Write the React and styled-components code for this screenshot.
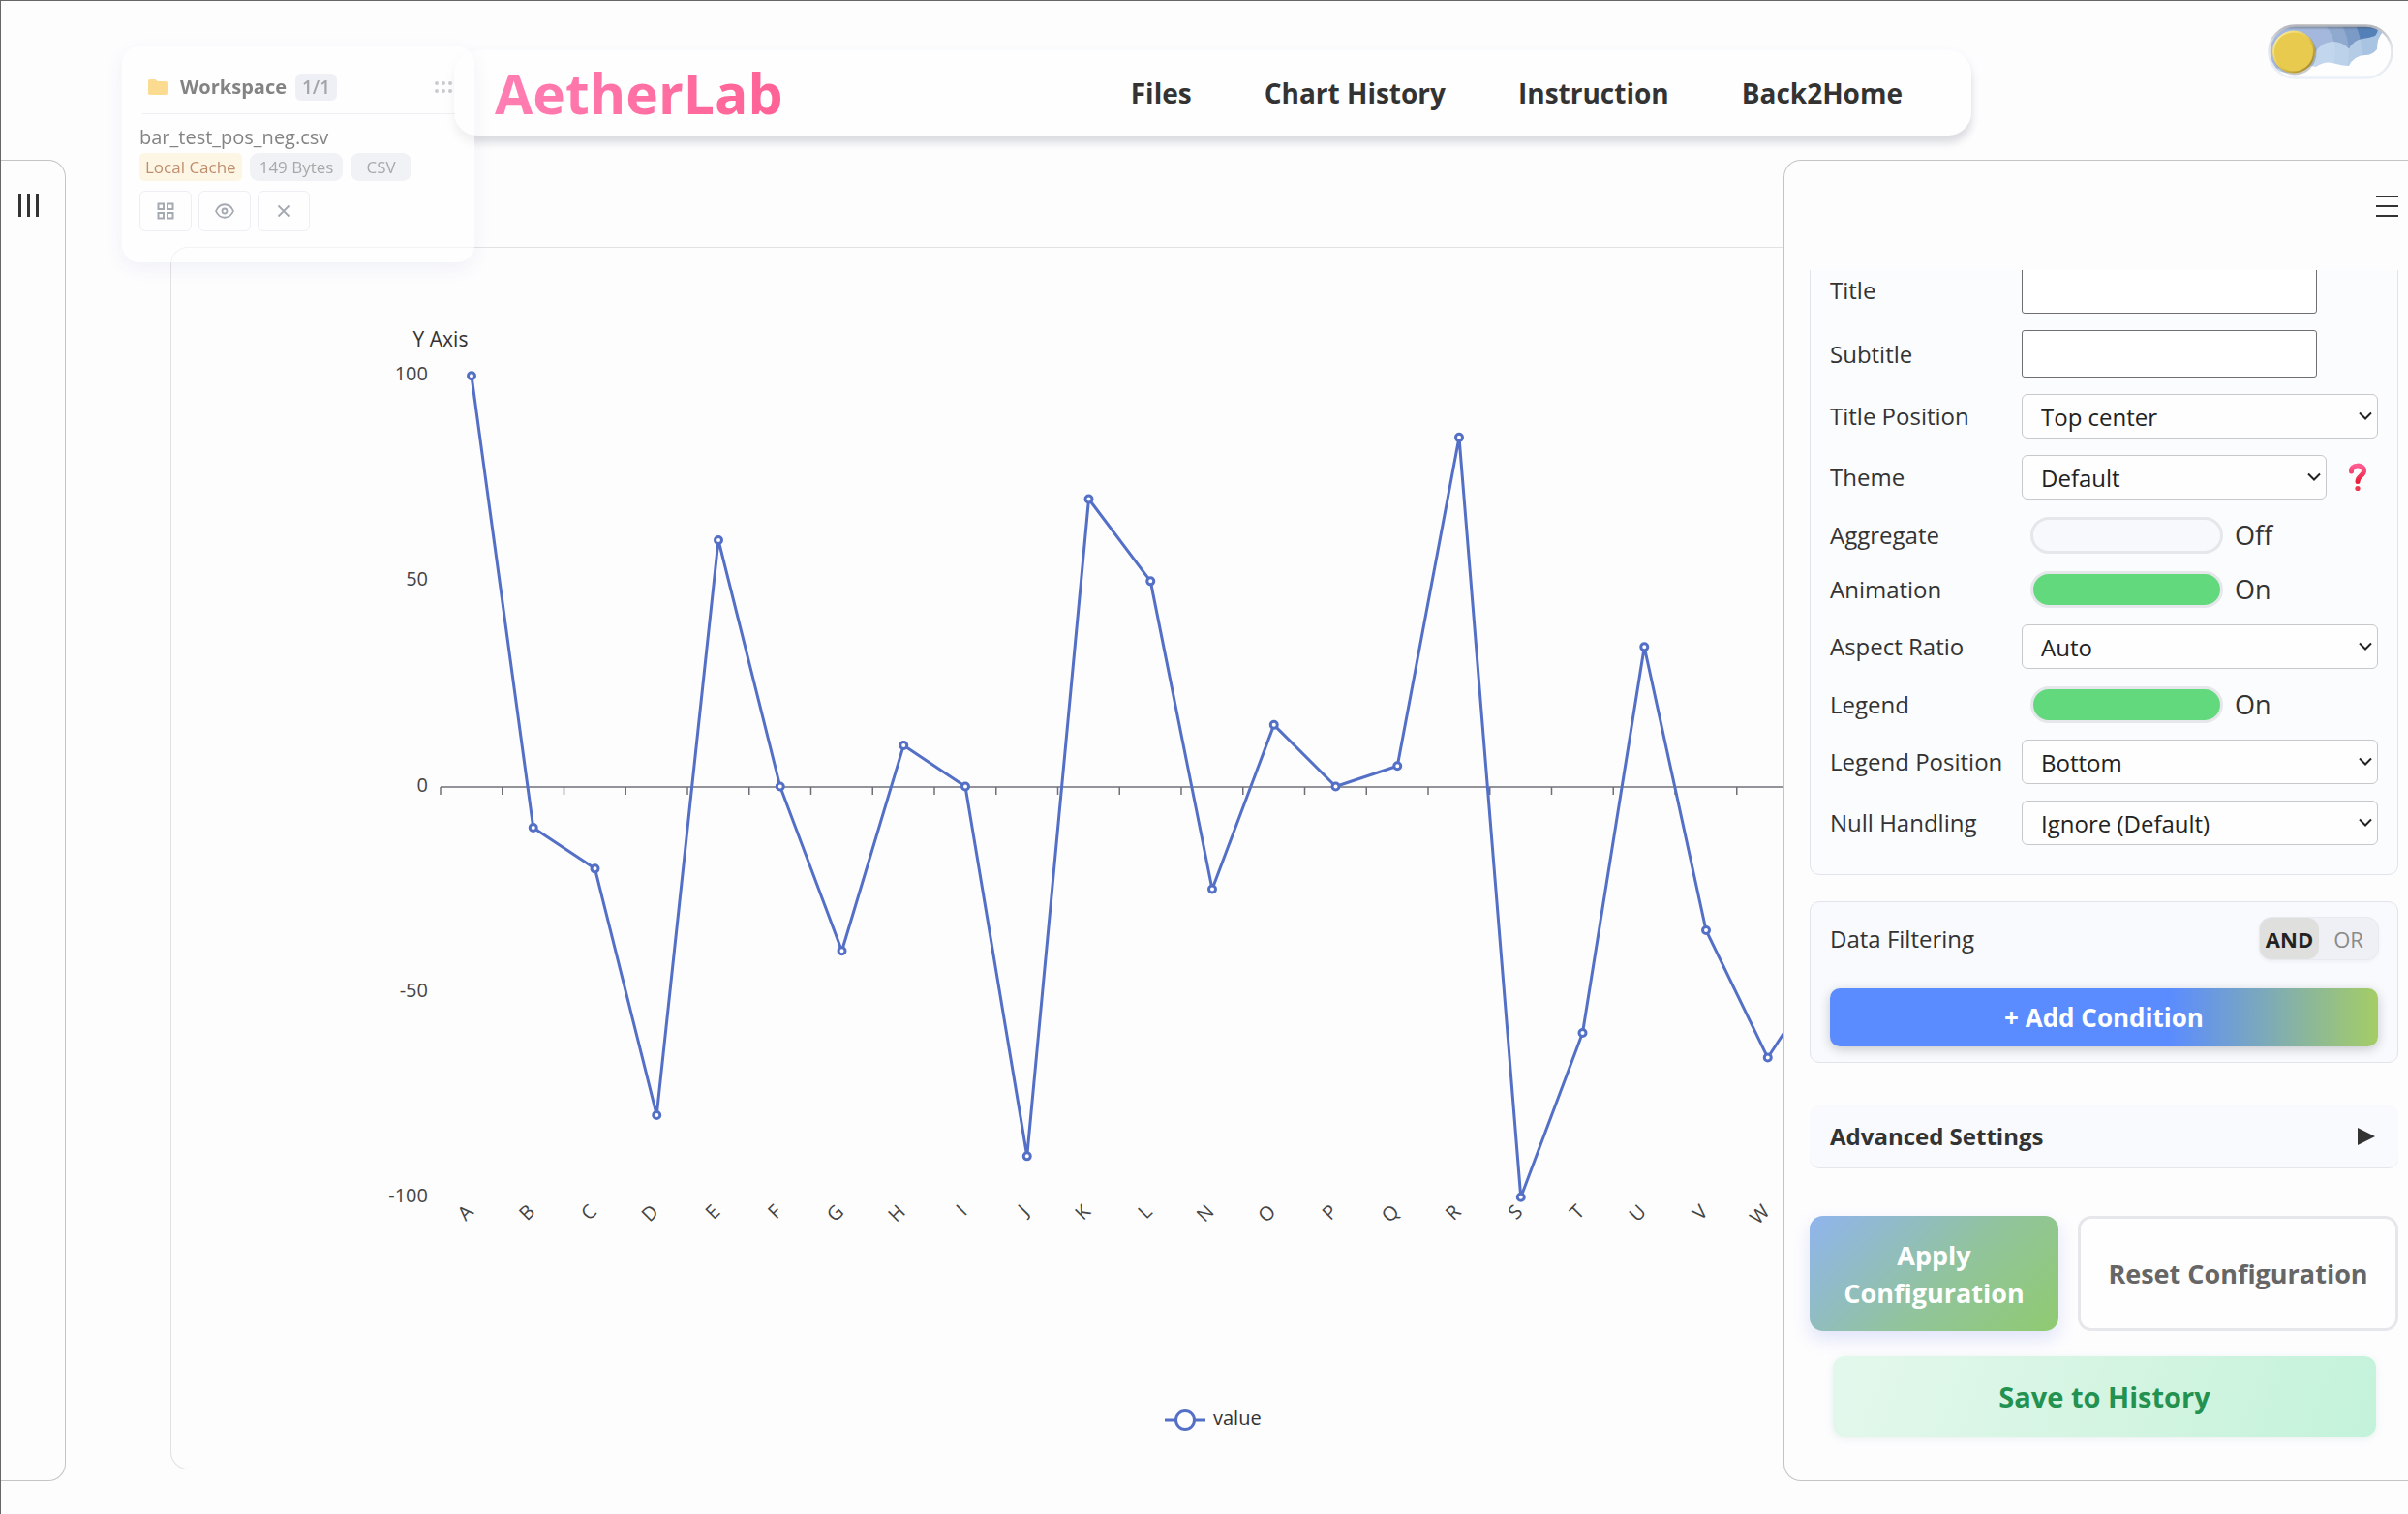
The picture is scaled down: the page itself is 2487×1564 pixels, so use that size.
import React, { useState } from "react";
import styled, { createGlobalStyle, css } from "styled-components";

const Global = createGlobalStyle`
  *, *::before, *::after { box-sizing: border-box; }
  body { margin: 0; background: #fdfdfe; }
  body, button, input, select { font-family: "Open Sans", "Noto Sans", sans-serif; color: #333; }
`;

const Page = styled.div`
  position: relative;
  min-height: 100vh;
  display: flex;
  flex-direction: column;
  overflow: hidden;
  border-top: 1px solid #666;
  border-left: 1px solid #666;
`;

/* ---------- top bar ---------- */

const TopBar = styled.div`
  display: grid;
  grid-template-columns: 468fr 1567fr 451fr;
  align-items: start;
  padding-top: 24px;
  height: 164px;
`;

const Header = styled.header`
  grid-column: 2;
  margin-top: 27px;
  height: 88px;
  padding: 0 71px 0 42px;
  display: flex;
  align-items: center;
  justify-content: space-between;
  border-radius: 24px;
  background: #fefefe;
  box-shadow: 0 8px 8px rgba(0, 0, 0, 0.1), 0 4px 12px rgba(60, 80, 140, 0.07);
`;

const Logo = styled.a`
  font-size: 57px;
  font-weight: 700;
  line-height: 80px;
  text-decoration: none;
  color: transparent;
  background: linear-gradient(90deg, #ff7eb3, #ff6295);
  background-clip: text;
  -webkit-background-clip: text;
`;

const Nav = styled.nav`
  display: flex;
  gap: 75px;
`;

const NavLink = styled.a`
  font-size: 28px;
  font-weight: 700;
  line-height: 40px;
  color: #333;
  text-decoration: none;
`;

const ThemeSwitch = styled.button`
  grid-column: 3;
  justify-self: end;
  margin-right: 15px;
  padding: 0;
  border: 0;
  width: 130px;
  height: 58px;
  background: none;
  svg { display: block; }
`;

/* ---------- floating workspace ---------- */

const Workspace = styled.section`
  position: absolute;
  left: 125px;
  top: 47px;
  z-index: 3;
  width: 364px;
  height: 223px;
  padding: 20px 20px 0 18px;
  border-radius: 18px;
  background: #fff;
  opacity: 0.6;
  box-shadow: 0 6px 20px rgba(70, 90, 160, 0.12);
`;

const WorkspaceHead = styled.div`
  display: flex;
  align-items: center;
  height: 50px;
  padding: 0 3px 6px 6px;
  border-bottom: 1px solid #e5e7eb;
  margin-left: 3px;
`;

const WorkspaceTitle = styled.h2`
  margin: 0 9px 0 13px;
  font-size: 20px;
  line-height: 28px;
  font-weight: 700;
`;

const Count = styled.span`
  padding: 0 7px;
  border-radius: 6px;
  background: #e7e9f0;
  color: #666a73;
  font-size: 19px;
  font-weight: 600;
  line-height: 28px;
`;

const Grip = styled.svg`
  margin-left: auto;
`;

const FileName = styled.div`
  margin-top: 10px;
  font-size: 20px;
  line-height: 28px;
  height: 30px;
`;

const Tags = styled.div`
  display: flex;
  gap: 8px;
`;

const Tag = styled.span`
  padding: 0 ${(p) => p.$pad}px;
  border-radius: ${(p) => (p.$warm ? 5 : 9)}px;
  background: ${(p) => (p.$warm ? "#fef3d3" : "#e9ebf2")};
  color: ${(p) => (p.$warm ? "#97450f" : "#70736f")};
  font-size: 17px;
  line-height: 29px;
  white-space: nowrap;
`;

const FileActions = styled.div`
  display: flex;
  gap: 7px;
  margin-top: 10px;
`;

const FileButton = styled.button`
  display: grid;
  place-items: center;
  width: 54px;
  height: 42px;
  padding: 0;
  border: 1px solid #e3e6ee;
  border-radius: 6px;
  background: #fff;
  color: #6b7280;
`;

/* ---------- body ---------- */

const Body = styled.div`
  display: flex;
  height: calc(100vh - 199px);
  min-height: 1250px;
`;

const LeftPanel = styled.aside`
  flex: 0 0 67px;
  border: 1px solid #c4c4c4;
  border-left: 0;
  border-radius: 0 18px 18px 0;
`;

const PanelToggle = styled.button`
  display: block;
  padding: 0;
  border: 0;
  background: none;
  line-height: 0;
  margin: ${(p) => (p.$left ? "34px 0 0 17px" : "35px 0 0 auto")};
`;

const ChartCard = styled.main`
  flex: 1 1 0;
  min-width: 0;
  margin: 90px 0 12px 108px;
  border: 1px solid #e2e2e4;
  border-right: 0;
  border-radius: 18px 0 0 18px;
  overflow: hidden;
`;

const ChartSvg = styled.svg`
  display: block;
  width: 100%;
  height: 1260px;
  font-family: "Open Sans", "Noto Sans", sans-serif;
`;

const RightPanel = styled.aside`
  flex: 0 0 645px;
  display: flex;
  flex-direction: column;
  border: 1px solid #c4c4c4;
  border-right: 0;
  border-radius: 18px 0 0 18px;
  background: #fdfdfe;
`;

const PanelHead = styled.div`
  flex: 0 0 113px;
  padding-right: 10px;
`;

const Scroller = styled.form`
  flex: 1 1 0;
  min-height: 0;
  overflow: hidden;
  display: flex;
  flex-direction: column;
  justify-content: flex-end;
  padding: 0 10px 45px 26px;
`;

const Card = styled.section`
  flex: none;
  border: 1px solid #e1e4eb;
  border-radius: 10px;
  background: ${(p) => p.$bg};
  padding: 16px 20px ${(p) => p.$bottom}px;
`;

const Options = styled(Card)`
  display: flex;
  flex-direction: column;
  gap: 17px;
`;

const Row = styled.div`
  display: grid;
  grid-template-columns: 198px 1fr;
  align-items: center;
`;

const labelText = css`
  font-size: 24px;
  line-height: 32px;
  color: #333;
`;

const Label = styled.label`
  ${labelText}
  white-space: nowrap;
`;

const TextBox = styled.input`
  width: 305px;
  height: 49px;
  padding: 0 10px;
  border: 1px solid #6f6f73;
  border-radius: 3px;
  background: #fff;
  font-size: 24px;
`;

const Controls = styled.div`
  display: flex;
  align-items: center;
`;

const SelectWrap = styled.div`
  position: relative;
  flex: ${(p) => (p.$short ? "0 0 315px" : "1")};
  svg {
    position: absolute;
    right: 6px;
    top: 18px;
    pointer-events: none;
  }
`;

const SelectBox = styled.select`
  appearance: none;
  display: block;
  width: 100%;
  height: 46px;
  padding: 0 30px 0 19px;
  border: 1px solid #c6c8cc;
  border-radius: 6px;
  background: #fefefe;
  font-size: 24px;
  color: #222;
`;

const HelpButton = styled.button`
  margin-left: 20px;
  padding: 0;
  border: 0;
  background: none;
  line-height: 0;
`;

const Switch = styled.input`
  appearance: none;
  margin: 0 12px 0 9px;
  width: 199px;
  height: 38px;
  border: 3px solid #e5e7eb;
  border-radius: 19px;
  background: #f8f9fc;
  &:checked { background: #63d97d; }
`;

const SwitchText = styled.span`
  font-size: 27px;
  line-height: 39px;
`;

const FilterHead = styled.div`
  display: flex;
  align-items: center;
  justify-content: space-between;
  margin-bottom: 30px;
`;

const FilterLabel = styled.span`
  ${labelText}
`;

const Segment = styled.div`
  display: flex;
  width: 122px;
  height: 43px;
  border-radius: 12px;
  background: #eef0f6;
  box-shadow: 0 0 0 1px #e8eaf1, 0 2px 4px rgba(60, 80, 140, 0.08);
`;

const SegmentButton = styled.button`
  flex: 1;
  padding: 0;
  border: 0;
  border-radius: 12px;
  font-size: 22px;
  background: ${(p) => (p.$on ? "#dfdfde" : "transparent")};
  font-weight: ${(p) => (p.$on ? 700 : 400)};
  color: ${(p) => (p.$on ? "#222" : "#8a8a88")};
`;

const AddButton = styled.button`
  display: block;
  width: 100%;
  height: 60px;
  border: 0;
  border-radius: 10px;
  background: linear-gradient(90deg, #5b8cff 0%, #5b8cff 62%, #a4cd66 100%);
  box-shadow: 0 3px 12px rgba(0, 0, 0, 0.2);
  color: #fff;
  font-size: 26px;
  font-weight: 700;
`;

const Advanced = styled.button`
  flex: none;
  display: flex;
  align-items: center;
  justify-content: space-between;
  margin-top: 43px;
  height: 66px;
  padding: 0 24px 0 21px;
  border: 0;
  border-bottom: 1px solid #e5e7ec;
  border-radius: 10px;
  background: #f9fafd;
  font-size: 24px;
  font-weight: 700;
`;

const Actions = styled.div`
  flex: none;
  display: grid;
  grid-template-columns: minmax(0, 257fr) minmax(0, 331fr);
  gap: 20px;
  margin: 49px 0 26px;
`;

const ActionButton = styled.button`
  height: 119px;
  border-radius: 14px;
  font-size: 27px;
  line-height: 39px;
  font-weight: 700;
  ${(p) =>
    p.$primary
      ? css`
          padding: 0 20px;
          border: 0;
          color: #fff;
          background: linear-gradient(135deg, #90b4ee 0%, #91c49c 55%, #90ca70 100%);
          box-shadow: 0 8px 18px rgba(91, 110, 220, 0.18);
        `
      : css`
          padding: 0;
          white-space: nowrap;
          border: 3px solid #e5e7eb;
          color: #666;
          background: #fefefe;
        `}
`;

const SaveButton = styled.button`
  flex: none;
  margin: 0 23px 0 24px;
  height: 83px;
  border: 0;
  border-radius: 12px;
  background: linear-gradient(110deg, #e3f8ec 0%, #d6f5e3 45%, #c3f2da 100%);
  box-shadow: 0 2px 8px rgba(60, 120, 100, 0.1);
  color: #239150;
  font-size: 29px;
  font-weight: 700;
`;

const Gap = styled.div`
  flex: 0 0 27px;
`;

/* ---------- chart ---------- */

const DATA = [
  ["A", 100], ["B", -10], ["C", -20], ["D", -80], ["E", 60], ["F", 0],
  ["G", -40], ["H", 10], ["I", 0], ["J", -90], ["K", 70], ["L", 50],
  ["N", -25], ["O", 15], ["P", 0], ["Q", 5], ["R", 85], ["S", -100],
  ["T", -60], ["U", 34], ["V", -35], ["W", -66], ["X", -43],
];
const STEP = 63.75;
const px = (i) => 310 + i * STEP;
const py = (v) => 556.5 - v * 4.243;

function Chart() {
  const zero = 557;
  return (
    <ChartSvg role="img" aria-label="Line chart of value">
      <text x="278" y="102" fontSize="21" textAnchor="middle" fill="#333">Y Axis</text>
      {[100, 50, 0, -50, -100].map((v) => (
        <text key={v} x="265" y={py(v) + 5} fontSize="20" textAnchor="end" fill="#444">{v}</text>
      ))}
      <line x1="278" x2="1700" y1={zero} y2={zero} stroke="#6e7079" strokeWidth="1.500" />
      {DATA.map(([name], i) => (
        <line key={name} x1={278 + i * STEP} x2={278 + i * STEP} y1={zero} y2={zero + 8} stroke="#6e7079" strokeWidth="1.500" />
      ))}
      <polyline
        points={DATA.map(([, v], i) => `${px(i)},${py(v)}`).join(" ")}
        fill="none" stroke="#5470c6" strokeWidth="3" strokeLinejoin="bevel"
      />
      {DATA.map(([name, v], i) => (
        <circle key={name} cx={px(i)} cy={py(v)} r="3.500" fill="#fff" stroke="#5470c6" strokeWidth="3" />
      ))}
      {DATA.slice(0, 22).map(([name], i) => (
        <text key={name} transform={`translate(${px(i) - 2} 992) rotate(-45)`} y="7" fontSize="20" textAnchor="end" fill="#444">
          {name}
        </text>
      ))}
      <g stroke="#5470c6" strokeWidth="3">
        <line x1="1026" x2="1068" y1="1211" y2="1211" />
        <circle cx="1047" cy="1211" r="9.500" fill="#fff" />
      </g>
      <text x="1076" y="1216" fontSize="20" fill="#333">value</text>
    </ChartSvg>
  );
}

/* ---------- small parts ---------- */

const Chevron = () => (
  <svg width="14" height="10" viewBox="0 0 14 10" fill="none" stroke="#222" strokeWidth="2">
    <path d="M1 1.500l6 6 6-6" />
  </svg>
);

function SelectRow({ id, label, value, short, children }) {
  return (
    <Row>
      <Label htmlFor={id}>{label}</Label>
      <Controls>
        <SelectWrap $short={short}>
          <SelectBox id={id} defaultValue={value}>
            <option>{value}</option>
          </SelectBox>
          <Chevron />
        </SelectWrap>
        {children}
      </Controls>
    </Row>
  );
}

function SwitchRow({ id, label, initial }) {
  const [on, setOn] = useState(initial);
  return (
    <Row>
      <Label htmlFor={id}>{label}</Label>
      <Controls>
        <Switch id={id} type="checkbox" checked={on} onChange={() => setOn(!on)} />
        <SwitchText>{on ? "On" : "Off"}</SwitchText>
      </Controls>
    </Row>
  );
}

const SkySwitch = () => (
  <svg width="130" height="58" viewBox="0 0 130 58">
    <defs>
      <clipPath id="pill"><rect x="2" y="2" width="126" height="53" rx="26.500" /></clipPath>
      <linearGradient id="shade" x1="0" y1="0" x2="0" y2="1">
        <stop offset="0" stopColor="#444" stopOpacity=".7" />
        <stop offset=".1" stopColor="#444" stopOpacity="0" />
      </linearGradient>
      <linearGradient id="rim" x1="0" y1="0" x2="0" y2="1">
        <stop offset="0" stopColor="#b4b6bb" />
        <stop offset=".35" stopColor="#dfe2e9" />
        <stop offset="1" stopColor="#ecf0f7" />
      </linearGradient>
      <linearGradient id="sun" x1="0" y1="0" x2="1" y2="1">
        <stop offset="0" stopColor="#fff3b0" />
        <stop offset=".5" stopColor="#e8ca4f" />
        <stop offset="1" stopColor="#8d7520" />
      </linearGradient>
    </defs>
    <g clipPath="url(#pill)">
      <rect width="130" height="58" fill="#5480b8" />
      <circle cx="27" cy="29" r="70" fill="#7b9ac6" />
      <circle cx="27" cy="29" r="57" fill="#8fa9cf" />
      <circle cx="27" cy="29" r="43" fill="#a3b8dc" />
      <path
        d="M0 58V50L49 30A21 21 0 0 1 84 25.500A19 19 0 0 1 98 15Q106 14 111 12Q115 7 114 0H130V58z"
        fill="#d2e4f6" opacity=".68"
      />
      <path
        d="M0 58V44Q6 46 10 48Q28 54 45 43L50 44A22 22 0 0 1 71 41Q77 43 84 43A18 18 0 0 1 101 32Q108 32 113 26Q113 14 119 8L130 0V58z"
        fill="#fefefe"
      />
      <rect width="130" height="58" fill="url(#shade)" />
    </g>
    <rect x="1.500" y="1.500" width="127" height="54" rx="27" fill="none" stroke="url(#rim)" strokeWidth="2.500" />
    <circle cx="28" cy="30" r="22.500" fill="#555" opacity=".3" />
    <circle cx="27" cy="28.500" r="22" fill="url(#sun)" />
    <circle cx="27" cy="28.500" r="20" fill="#e8ca4f" />
  </svg>
);

export default function App() {
  return (
    <>
      <Global />
      <Page>
        <TopBar>
          <Header>
            <Logo href="#">AetherLab</Logo>
            <Nav>
              <NavLink href="#files">Files</NavLink>
              <NavLink href="#history">Chart History</NavLink>
              <NavLink href="#instruction">Instruction</NavLink>
              <NavLink href="#home">Back2Home</NavLink>
            </Nav>
          </Header>
          <ThemeSwitch type="button" aria-label="Toggle day and night"><SkySwitch /></ThemeSwitch>
        </TopBar>

        <Workspace>
          <WorkspaceHead>
            <svg width="20" height="16" viewBox="0 0 20 16" fill="#fbc646">
              <path d="M2 0h5.500l2 2H18a2 2 0 0 1 2 2v10a2 2 0 0 1-2 2H2a2 2 0 0 1-2-2V2a2 2 0 0 1 2-2z" />
            </svg>
            <WorkspaceTitle>Workspace</WorkspaceTitle>
            <Count>1/1</Count>
            <Grip width="18" height="12" fill="#a9abb3">
              {[2, 9, 16].map((x) => [2, 10].map((y) => <circle key={`${x}-${y}`} cx={x} cy={y} r="2" />))}
            </Grip>
          </WorkspaceHead>
          <FileName>bar_test_pos_neg.csv</FileName>
          <Tags>
            <Tag $warm $pad={6}>Local Cache</Tag>
            <Tag $pad={10}>149 Bytes</Tag>
            <Tag $pad={16}>CSV</Tag>
          </Tags>
          <FileActions>
            <FileButton type="button" aria-label="Grid">
              <svg width="18" height="18" fill="none" stroke="currentColor" strokeWidth="2">
                <path d="M1.500 1.500h5.500v5.500H1.500zM11 1.500h5.500v5.500H11zM1.500 11h5.500v5.500H1.500zM11 11h5.500v5.500H11z" />
              </svg>
            </FileButton>
            <FileButton type="button" aria-label="Preview">
              <svg width="20" height="16" fill="none" stroke="currentColor" strokeWidth="1.800">
                <path d="M1 8c4-9 14-9 18 0-4 9-14 9-18 0z" />
                <circle cx="10" cy="8" r="2.500" />
              </svg>
            </FileButton>
            <FileButton type="button" aria-label="Remove">
              <svg width="14" height="14" fill="none" stroke="currentColor" strokeWidth="1.800">
                <path d="M1.500 1.500l11 11M12.500 1.500l-11 11" />
              </svg>
            </FileButton>
          </FileActions>
        </Workspace>

        <Body>
          <LeftPanel>
            <PanelToggle $left type="button" aria-label="Open left panel">
              <svg width="24" height="24" fill="#333">
                <path d="M1 0h3v24H1zM10 0h3v24h-3zM19 0h3v24h-3z" />
              </svg>
            </PanelToggle>
          </LeftPanel>
          <ChartCard><Chart /></ChartCard>
          <RightPanel>
            <PanelHead>
              <PanelToggle type="button" aria-label="Toggle settings">
                <svg width="23" height="24" fill="#333">
                  <path d="M0 1h23v2H0zM0 11h23v2H0zM0 21h23v2H0z" />
                </svg>
              </PanelToggle>
            </PanelHead>
            <Scroller onSubmit={(e) => e.preventDefault()}>
              <Options $bg="#fbfcfe" $bottom={30}>
                <Row>
                  <Label htmlFor="title">Title</Label>
                  <TextBox id="title" />
                </Row>
                <Row>
                  <Label htmlFor="subtitle">Subtitle</Label>
                  <TextBox id="subtitle" />
                </Row>
                <SelectRow id="title-position" label="Title Position" value="Top center" />
                <SelectRow id="theme" label="Theme" value="Default" short>
                  <HelpButton type="button" aria-label="About themes">
                    <svg width="24" height="30" viewBox="0 0 24 30" fill="none">
                      <defs>
                        <linearGradient id="mark" x1="0" y1="0" x2="0" y2="1">
                          <stop offset="0" stopColor="#ff5c92" />
                          <stop offset="1" stopColor="#e8203c" />
                        </linearGradient>
                      </defs>
                      <path d="M5.500 9C5 1.500 18.500 1 18.500 8.500c0 5-6.500 5-6.500 11" stroke="url(#mark)" strokeWidth="5" strokeLinecap="round" />
                      <circle cx="12" cy="26.500" r="2.600" fill="#f0364f" />
                    </svg>
                  </HelpButton>
                </SelectRow>
                <SwitchRow id="aggregate" label="Aggregate" initial={false} />
                <SwitchRow id="animation" label="Animation" initial />
                <SelectRow id="aspect" label="Aspect Ratio" value="Auto" />
                <SwitchRow id="legend" label="Legend" initial />
                <SelectRow id="legend-position" label="Legend Position" value="Bottom" />
                <SelectRow id="nulls" label="Null Handling" value="Ignore (Default)" />
              </Options>
              <Gap />
              <Card $bg="#f9fafd" $bottom={16}>
                <FilterHead>
                  <FilterLabel>Data Filtering</FilterLabel>
                  <Segment>
                    <SegmentButton $on type="button">AND</SegmentButton>
                    <SegmentButton type="button">OR</SegmentButton>
                  </Segment>
                </FilterHead>
                <AddButton type="button">+ Add Condition</AddButton>
              </Card>
              <Advanced type="button">
                Advanced Settings
                <svg width="18" height="18" fill="#333"><path d="M0 0l18 9-18 9z" /></svg>
              </Advanced>
              <Actions>
                <ActionButton $primary type="submit">Apply Configuration</ActionButton>
                <ActionButton type="reset">Reset Configuration</ActionButton>
              </Actions>
              <SaveButton type="button">Save to History</SaveButton>
            </Scroller>
          </RightPanel>
        </Body>
      </Page>
    </>
  );
}
